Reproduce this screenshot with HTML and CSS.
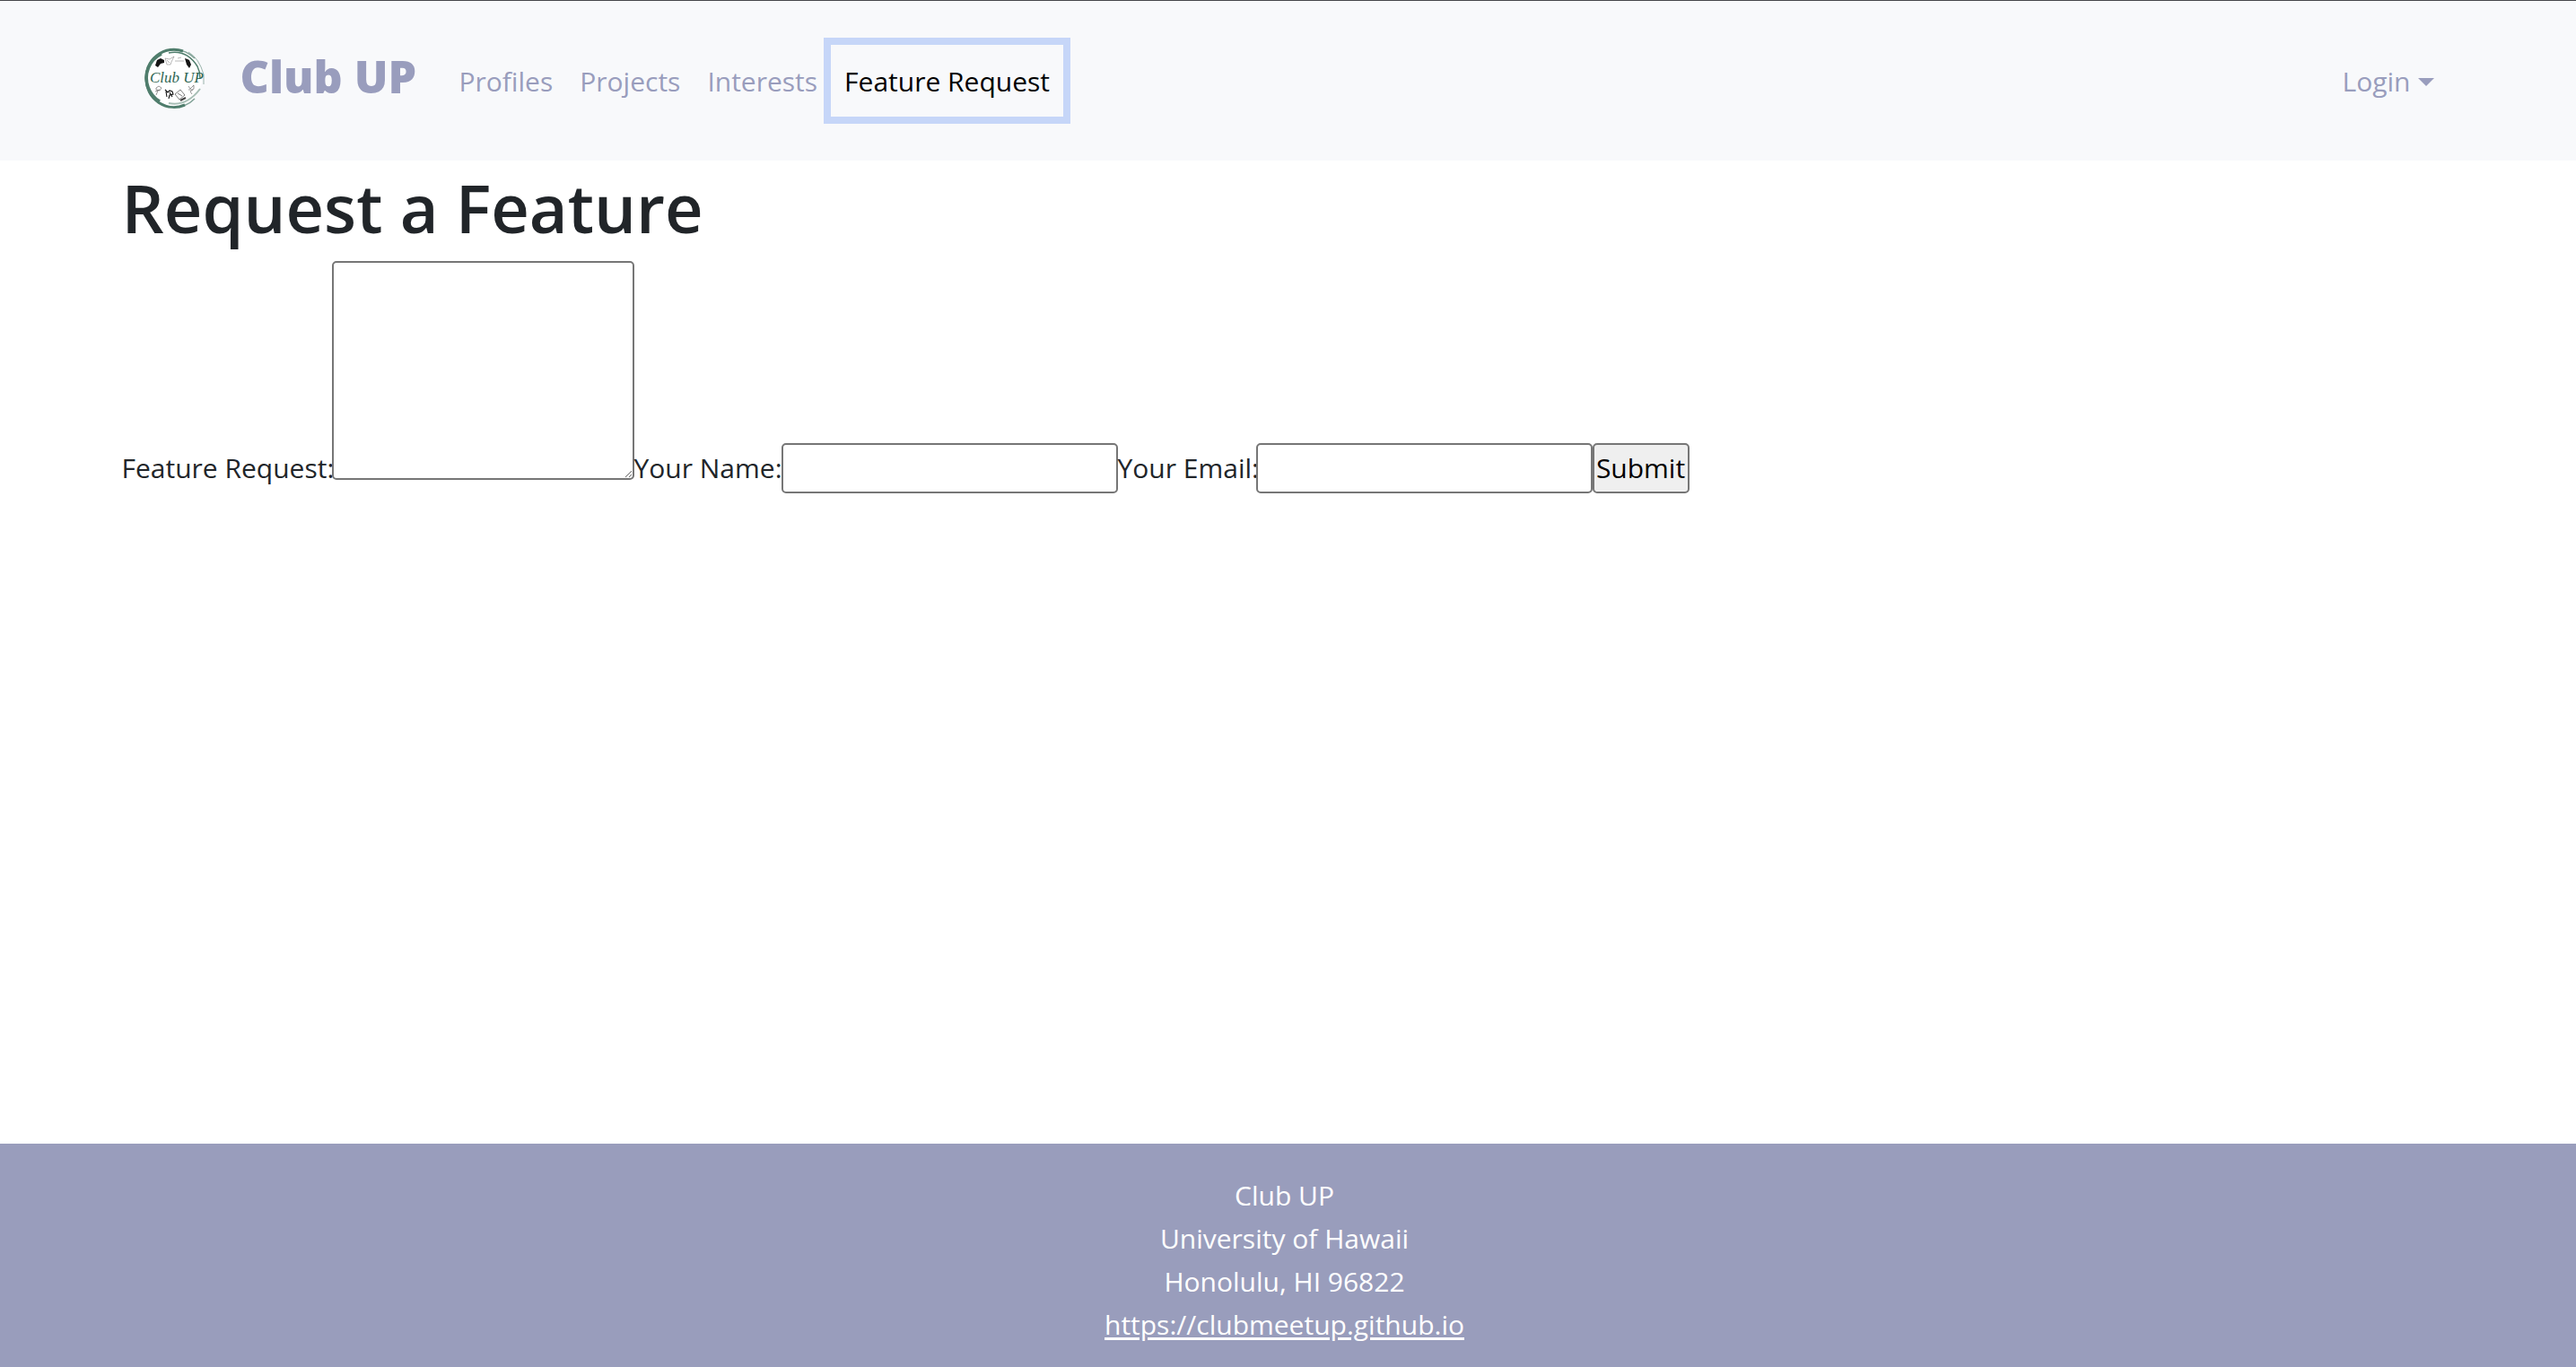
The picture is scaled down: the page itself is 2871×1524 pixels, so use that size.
FILE: index.html
```html
<!DOCTYPE html>
<html lang="en">
<head>
  <meta charset="utf-8">
  <meta name="viewport" content="width=device-width, initial-scale=1">
  <title>Club UP</title>
  <link rel="stylesheet" href="styles.css">
</head>
<body>
  <header class="navbar">
    <div class="container navbar-inner">
      <a class="brand" href="#">
        <svg class="brand-logo" viewBox="0 0 68 68" aria-label="Club UP logo">
          <circle cx="34" cy="34" r="31" fill="#fff"/>
          <g fill="none" stroke="#4f7d6c">
            <path d="M57 12A32 32 0 1 0 57 57" stroke-width="1.5" opacity=".7"/>
            <path d="M44 4A31 31 0 0 0 3 36A31 31 0 0 0 46 64" stroke-width="3"/>
            <path d="M20 7A30 30 0 0 0 5 44Q9 55 18 60" stroke-width="3.5"/>
            <path d="M28 6Q48 2 60 21Q63 27 63 34" stroke-width="1.5"/>
            <path d="M50 5Q62 12 67 30V41" stroke-width=".8" opacity=".7"/>
            <path d="M28 62Q48 66 63 46" stroke-width="2" opacity=".5"/>
          </g>
          <text class="logo-script" x="7" y="39">Club UP</text>
          <path d="M13 20l2-6 4-2 4 2v3l-4 1-3 4zM46 12l3 1 2 1 2 5-2 4-3-4z" fill="#151515"/>
          <g fill="none" stroke="#444" stroke-width=".7">
            <path d="M24 12l5 1 5-3-3 6-1 3h-4zM26 14l3 3M35 15h10M38 12l4-1" opacity=".55"/>
            <path d="M14 45l3-2 3 2-2 3-4-1zM16 48l-2 5M13 49l5-2" opacity=".8"/>
            <path d="M24 47l3 3 2-2 3 1 1 3-4 1-1 4M25 49l1 6M29 50l3 5" stroke="#111" stroke-width="1.1"/>
            <path d="M35 52l6-5 5 6-6 5zM38 51l5 3"/>
            <path d="M41 59l6-3" stroke-width="2"/>
            <path d="M50 43l2 3 4-4v4l-4 3 2 3M50 47h5" opacity=".8"/>
          </g>
        </svg>
        <span class="brand-name">Club UP</span>
      </a>
      <nav class="nav">
        <a class="nav-link" href="#">Profiles</a>
        <a class="nav-link" href="#">Projects</a>
        <a class="nav-link" href="#">Interests</a>
        <a class="nav-link active" href="#" aria-current="page">Feature Request</a>
      </nav>
      <button class="nav-link login" type="button" aria-haspopup="true">Login<span class="caret"></span></button>
    </div>
  </header>

  <main class="container">
    <h1 class="title">Request a Feature</h1>
    <form class="request-form">
      <label class="label-request" for="request">Feature Request:</label>
      <textarea class="field request" id="request"></textarea>
      <label class="label-name" for="name">Your Name:</label>
      <input class="field" id="name" type="text">
      <label class="label-email" for="email">Your Email:</label>
      <input class="field" id="email" type="email">
      <button class="submit" type="submit">Submit</button>
    </form>
  </main>

  <footer class="footer">
    <div>Club UP</div>
    <div>University of Hawaii</div>
    <div>Honolulu, HI 96822</div>
    <a href="https://clubmeetup.github.io">https://clubmeetup.github.io</a>
  </footer>
</body>
</html>
```
FILE: styles.css
```css
* {
  box-sizing: border-box;
}

body {
  margin: 0;
  min-height: 100vh;
  display: flex;
  flex-direction: column;
  padding-right: 8px;
  background: #fff;
  color: #212529;
  font-family: "Segoe UI", "Open Sans", "Noto Sans", sans-serif;
  font-size: 30px;
  line-height: 48px;
}

button,
input,
textarea {
  margin: 0;
  font: inherit;
}

.container {
  width: 100%;
  max-width: 2640px;
  margin: 0 auto;
  padding: 0 24px;
}

.navbar {
  margin-right: -8px;
  padding: 32px 8px 32px 0;
  border-top: 1px solid #46474b;
  background: #f8f9fb;
}

.navbar-inner {
  display: flex;
  align-items: center;
  min-height: 114px;
  padding: 0 24px 0 48px;
}

.brand {
  display: flex;
  align-items: center;
  gap: 40px;
  width: 337px;
  padding-bottom: 6px;
  color: #999dbd;
  text-decoration: none;
}

.brand-logo {
  flex: none;
  width: 68px;
  height: 68px;
}

.logo-script {
  fill: #2f6653;
  font: italic 17px "Liberation Serif", serif;
}

.brand-name {
  padding-bottom: 4px;
  font-size: 50px;
  font-weight: 800;
  white-space: nowrap;
}

.nav {
  display: flex;
}

.nav-link {
  padding: 17px 15px 15px;
  border: 0;
  background: none;
  color: #999dbd;
  text-decoration: none;
  white-space: nowrap;
}

.nav-link.active {
  color: #000;
  box-shadow: 0 0 0 8px #c6d6f8;
}

.login {
  display: flex;
  align-items: center;
  gap: 8px;
  margin-left: auto;
}

.caret {
  border: 9px solid transparent;
  border-top-color: #999dbd;
  border-bottom: 0;
}

.title {
  margin: 8px 0 14px;
  font-size: 74px;
  font-weight: 600;
  line-height: 90px;
}

.request-form {
  display: flex;
  align-items: flex-end;
}

.request-form label {
  line-height: 56px;
  white-space: nowrap;
}

.label-request {
  width: 234px;
}

.label-name {
  width: 164px;
}

.label-email {
  width: 154px;
}

.field {
  width: 375px;
  height: 56px;
  padding: 2px 4px;
  border: 2px solid #767676;
  border-radius: 5px;
  background: #fff;
}

.request {
  width: 337px;
  height: 244px;
  margin-bottom: 15px;
  resize: both;
}

.submit {
  width: 108px;
  height: 56px;
  padding: 0;
  border: 2px solid #767676;
  border-radius: 5px;
  background: #efefef;
  color: #000;
}

.footer {
  margin: auto -8px 0 0;
  padding: 34px 8px 23px 0;
  background: #999dbc;
  color: #fff;
  text-align: center;
}

.footer a {
  color: inherit;
  text-underline-offset: 3px;
}
```
